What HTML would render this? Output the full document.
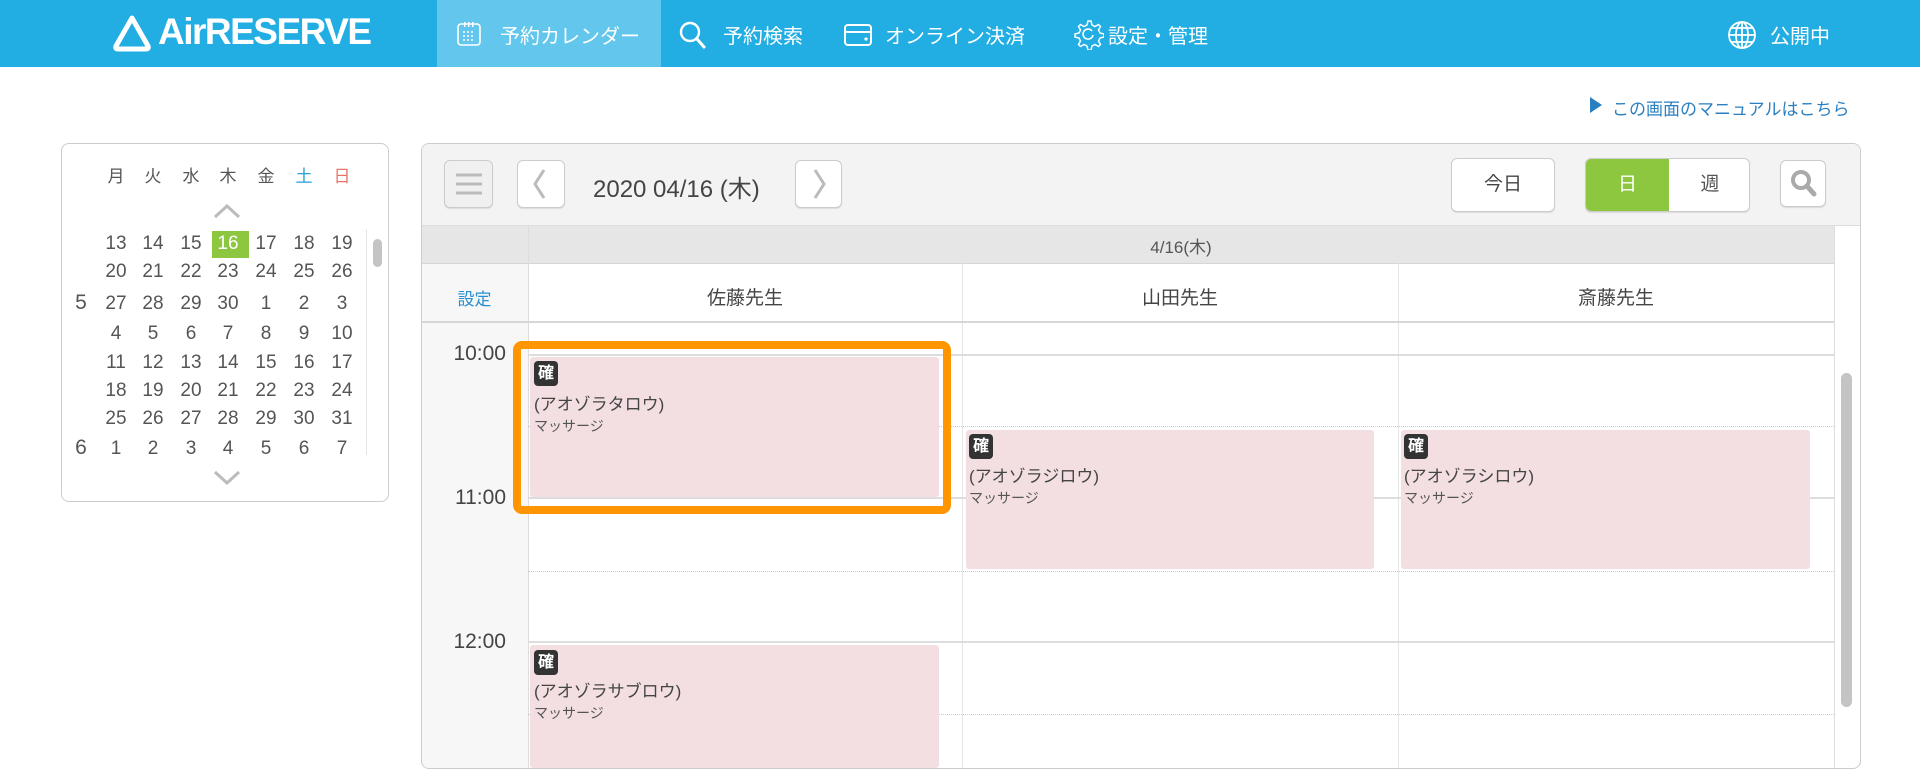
<!DOCTYPE html>
<html><head><meta charset="utf-8">
<style>
*{box-sizing:border-box;margin:0;padding:0}
body{width:1920px;height:780px;background:#fff;position:relative;overflow:hidden;font-family:"Liberation Sans","Noto Sans CJK JP",sans-serif;color:#444}
.a{position:absolute}
.hdr{left:0;top:0;width:1920px;height:67px;background:#22aee3}
.nav{color:#fff;font-size:20px;top:20px;white-space:nowrap}
.cal .d{position:absolute;width:38px;text-align:center;font-size:19px;color:#555}
.btn{background:#fff;border:1px solid #ccc;border-radius:6px;box-shadow:0 1px 1px rgba(0,0,0,.1)}
.hl{left:528px;width:1306px;height:0}
.ev{background:#f3dfe1;border-radius:3px}
.badge{background:#333;color:#fff;font-size:16px;font-weight:bold;width:24px;height:25px;border-radius:4px;text-align:center;line-height:25px}
.en{font-size:17px;color:#444}
.es{font-size:14px;color:#555}
.tl{font-size:21px;color:#444;width:80px;text-align:right;left:426px}
</style></head><body>
<div class="a hdr"></div>
<div class="a" style="left:437px;top:0;width:224px;height:67px;background:#63c6ec"></div>
<svg class="a" style="left:112px;top:14px" width="40" height="38" viewBox="0 0 40 38"><path d="M20 4 L36 32 Q37 35 34 35 L6 35 Q3 35 4 32 Z" fill="none" stroke="#fff" stroke-width="5" stroke-linejoin="round"/></svg>
<div class="a" style="left:158px;top:11px;color:#fff;font-size:37px;font-weight:bold;letter-spacing:-1.5px">AirRESERVE</div>
<svg class="a" style="left:455px;top:20px" width="28" height="28" viewBox="0 0 28 28"><rect x="3" y="4" width="22" height="21" rx="3" fill="none" stroke="#fff" stroke-width="1.6"/><g fill="#fff"><rect x="9" y="2" width="1.5" height="5"/><rect x="13" y="2" width="1.5" height="5"/><rect x="17" y="2" width="1.5" height="5"/><circle cx="9" cy="12" r="1"/><circle cx="13" cy="12" r="1"/><circle cx="17" cy="12" r="1"/><circle cx="9" cy="16" r="1"/><circle cx="13" cy="16" r="1"/><circle cx="17" cy="16" r="1"/><circle cx="9" cy="20" r="1"/><circle cx="13" cy="20" r="1"/><circle cx="17" cy="20" r="1"/></g></svg>
<div class="a nav" style="left:500px">予約カレンダー</div>
<svg class="a" style="left:678px;top:20px" width="30" height="30" viewBox="0 0 30 30"><circle cx="12" cy="12" r="9" fill="none" stroke="#fff" stroke-width="2.4"/><path d="M19 19 L26 27" stroke="#fff" stroke-width="3" stroke-linecap="round"/></svg>
<div class="a nav" style="left:723px">予約検索</div>
<svg class="a" style="left:843px;top:22px" width="30" height="26" viewBox="0 0 30 26"><rect x="2" y="3" width="26" height="20" rx="3" fill="none" stroke="#fff" stroke-width="2"/><path d="M2 10 H28" stroke="#fff" stroke-width="2"/><circle cx="23" cy="17" r="1.6" fill="#fff"/></svg>
<div class="a nav" style="left:885px">オンライン決済</div>
<svg class="a" style="left:1072px;top:18px" width="32" height="32" viewBox="0 0 32 32"><path d="M16 3 l3 0 1 4 3 1.5 3.5-2 2 2-2 3.5 1.5 3 4 1 0 3-4 1-1.5 3 2 3.5-2 2-3.5-2-3 1.5-1 4h-3l-1-4-3-1.5-3.5 2-2-2 2-3.5-1.5-3-4-1v-3l4-1 1.5-3-2-3.5 2-2 3.5 2 3-1.5 1-4z" fill="none" stroke="#fff" stroke-width="1.5"/><path d="M20 13 a5 5 0 1 0 1 4" fill="none" stroke="#fff" stroke-width="1.6"/></svg>
<div class="a nav" style="left:1108px">設定・管理</div>
<svg class="a" style="left:1726px;top:19px" width="32" height="32" viewBox="0 0 32 32"><g fill="none" stroke="#fff" stroke-width="1.8"><circle cx="16" cy="16" r="13"/><ellipse cx="16" cy="16" rx="6" ry="13"/><path d="M3 16H29M5 9H27M5 23H27M16 3V29"/></g></svg>
<div class="a nav" style="left:1770px">公開中</div>
<svg class="a" style="left:1590px;top:97px" width="12" height="16" viewBox="0 0 12 16"><path d="M0 0 L12 8 L0 16Z" fill="#2a7fc0"/></svg>
<div class="a" style="left:1612px;top:95px;font-size:17px;color:#2a7fc0">この画面のマニュアルはこちら</div>
<div class="a" style="left:61px;top:143px;width:328px;height:359px;border:1px solid #ccc;border-radius:8px"></div>
<div class="a cal" style="left:0;top:0">
<div class="d" style="left:97px;top:162px;font-size:17px">月</div><div class="d" style="left:134px;top:162px;font-size:17px">火</div><div class="d" style="left:172px;top:162px;font-size:17px">水</div><div class="d" style="left:209px;top:162px;font-size:17px">木</div><div class="d" style="left:247px;top:162px;font-size:17px">金</div><div class="d" style="left:285px;top:162px;font-size:17px;color:#2aa0d8">土</div><div class="d" style="left:323px;top:162px;font-size:17px;color:#e8756a">日</div>
</div>
<svg class="a" style="left:212px;top:203px" width="30" height="16" viewBox="0 0 30 16"><path d="M3 14 L15 3 L27 14" fill="none" stroke="#bbb" stroke-width="3"/></svg>
<div class="a" style="left:212px;top:231px;width:37px;height:27px;background:#8dc63f"></div>
<div class="a" style="left:366px;top:229px;width:1px;height:226px;background:#e5e5e5"></div>
<div class="a" style="left:373px;top:239px;width:9px;height:28px;background:#c4c4c4;border-radius:5px"></div>
<div class="a cal" style="left:0;top:0;height:455px;width:366px;overflow:hidden" id="c"></div>
<svg class="a" style="left:212px;top:470px" width="30" height="16" viewBox="0 0 30 16"><path d="M3 2 L15 13 L27 2" fill="none" stroke="#bbb" stroke-width="3"/></svg>
<script>
var rows=[[13,14,15,16,17,18,19],[20,21,22,23,24,25,26],[27,28,29,30,1,2,3],[4,5,6,7,8,9,10],[11,12,13,14,15,16,17],[18,19,20,21,22,23,24],[25,26,27,28,29,30,31],[1,2,3,4,5,6,7]];
var ys=[233,261,293,323,352,380,408,438];var xs=[97,134,172,209,247,285,323];var h='';
rows.forEach(function(r,i){r.forEach(function(n,j){h+='<div class="d" style="left:'+xs[j]+'px;top:'+ys[i]+'px;'+(i==0&&j==3?'color:#fff':'')+'">'+n+'</div>';});});
h+='<div class="d" style="left:62px;top:'+(ys[2]-2)+'px;font-size:21px">5</div><div class="d" style="left:62px;top:'+(ys[7]-2)+'px;font-size:21px">6</div>';
document.getElementById('c').innerHTML=h;
</script>
<div class="a" style="left:421px;top:143px;width:1440px;height:626px;border:1px solid #ccc;border-radius:8px;overflow:hidden;background:#fff">
 <div class="a" style="left:0;top:0;width:1440px;height:82px;background:#f3f3f3;border-bottom:1px solid #ddd"></div>
 <div class="a" style="left:0;top:82px;width:107px;height:544px;background:#f7f7f7"></div>
 <div class="a" style="left:0;top:82px;width:1413px;height:38px;background:#e6e6e6;border-bottom:1px solid #d6d6d6"></div>
</div>
<div class="a btn" style="left:444px;top:160px;width:49px;height:48px;background:#f0f0f0"></div>
<svg class="a" style="left:456px;top:172px" width="26" height="24"><g stroke="#bbb" stroke-width="3"><path d="M0 3H26M0 12H26M0 21H26"/></g></svg>
<div class="a btn" style="left:517px;top:160px;width:48px;height:48px"></div>
<svg class="a" style="left:530px;top:168px" width="20" height="32"><path d="M14 2 L5 16 L14 30" fill="none" stroke="#bbb" stroke-width="3"/></svg>
<div class="a" style="left:593px;top:169px;font-size:24px;color:#444">2020 04/16 (木)</div>
<div class="a btn" style="left:795px;top:160px;width:47px;height:48px"></div>
<svg class="a" style="left:810px;top:168px" width="20" height="32"><path d="M5 2 L14 16 L5 30" fill="none" stroke="#bbb" stroke-width="3"/></svg>
<div class="a btn" style="left:1451px;top:158px;width:104px;height:54px;text-align:center;line-height:52px;font-size:19px">今日</div>
<div class="a btn" style="left:1585px;top:158px;width:165px;height:54px;overflow:hidden"><div class="a" style="left:0;top:0;width:83px;height:54px;background:#8dc63f;color:#fff;text-align:center;line-height:52px;font-size:19px">日</div><div class="a" style="left:83px;top:0;width:82px;height:54px;text-align:center;line-height:52px;font-size:19px;color:#555">週</div></div>
<div class="a btn" style="left:1780px;top:160px;width:46px;height:47px"></div>
<svg class="a" style="left:1789px;top:168px" width="30" height="32"><circle cx="12" cy="12" r="8" fill="none" stroke="#aaa" stroke-width="4"/><path d="M18 18 L25 26" stroke="#aaa" stroke-width="5" stroke-linecap="round"/></svg>
<div class="a" style="left:528px;top:233px;width:1306px;text-align:center;font-size:17px;color:#555">4/16(木)</div>
<div class="a" style="left:528px;top:225px;width:1px;height:543px;background:#ddd"></div>
<div class="a" style="left:962px;top:263px;width:1px;height:505px;background:#e5e5e5"></div>
<div class="a" style="left:1398px;top:263px;width:1px;height:505px;background:#e5e5e5"></div>
<div class="a" style="left:1834px;top:225px;width:1px;height:543px;background:#ddd"></div>
<div class="a" style="left:421px;top:321px;width:1413px;height:2px;background:#d6d6d6"></div>
<div class="a" style="left:421px;top:285px;width:107px;text-align:center;font-size:17px;color:#2a8fd0">設定</div>
<div class="a" style="left:528px;top:283px;width:434px;text-align:center;font-size:19px">佐藤先生</div>
<div class="a" style="left:962px;top:283px;width:436px;text-align:center;font-size:19px">山田先生</div>
<div class="a" style="left:1398px;top:283px;width:436px;text-align:center;font-size:19px">斎藤先生</div>
<div class="a hl" style="top:354px;border-top:2px solid #ddd"></div>
<div class="a hl" style="top:426px;border-top:1px dotted #ccc"></div>
<div class="a hl" style="top:497px;border-top:2px solid #ddd"></div>
<div class="a hl" style="top:571px;border-top:1px dotted #ccc"></div>
<div class="a hl" style="top:641px;border-top:2px solid #ddd"></div>
<div class="a hl" style="top:714px;border-top:1px dotted #ccc"></div>
<div class="a tl" style="top:342px">10:00</div>
<div class="a tl" style="top:486px">11:00</div>
<div class="a tl" style="top:630px">12:00</div>
<div class="a" style="left:1841px;top:373px;width:11px;height:334px;background:#c4c4c4;border-radius:6px"></div>
<div class="a ev" style="left:530px;top:357px;width:409px;height:140px"></div>
<div class="a badge" style="left:534px;top:361px">確</div>
<div class="a en" style="left:534px;top:390px">(アオゾラタロウ)</div>
<div class="a es" style="left:534px;top:416px">マッサージ</div>
<div class="a" style="left:513px;top:341px;width:438px;height:173px;border:8px solid #ff9500;border-radius:9px"></div>
<div class="a ev" style="left:966px;top:430px;width:408px;height:139px"></div>
<div class="a badge" style="left:969px;top:434px">確</div>
<div class="a en" style="left:969px;top:462px">(アオゾラジロウ)</div>
<div class="a es" style="left:969px;top:488px">マッサージ</div>
<div class="a ev" style="left:1401px;top:430px;width:409px;height:139px"></div>
<div class="a badge" style="left:1404px;top:434px">確</div>
<div class="a en" style="left:1404px;top:462px">(アオゾラシロウ)</div>
<div class="a es" style="left:1404px;top:488px">マッサージ</div>
<div class="a ev" style="left:530px;top:645px;width:409px;height:123px"></div>
<div class="a badge" style="left:534px;top:650px">確</div>
<div class="a en" style="left:534px;top:677px">(アオゾラサブロウ)</div>
<div class="a es" style="left:534px;top:703px">マッサージ</div>
</body></html>
